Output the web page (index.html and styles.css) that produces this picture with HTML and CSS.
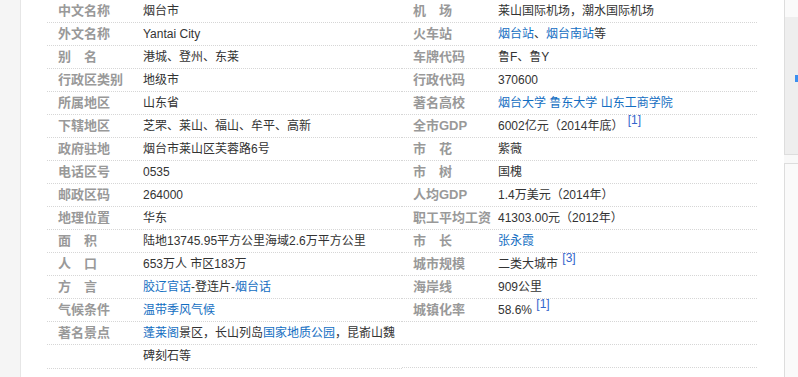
FILE: index.html
```html
<!DOCTYPE html>
<html lang="zh-CN">
<head>
<meta charset="utf-8">
<title>烟台市 基本信息</title>
<link rel="stylesheet" href="styles.css">
</head>
<body>
<div class="page">
  <aside class="rail"></aside>
  <main class="content">
    <div class="basic-info">
      <dl class="info-col">
        <div class="item"><dt>中文名称</dt><dd>烟台市</dd></div>
        <div class="item"><dt>外文名称</dt><dd>Yantai City</dd></div>
        <div class="item"><dt>别　名</dt><dd>港城、登州、东莱</dd></div>
        <div class="item"><dt>行政区类别</dt><dd>地级市</dd></div>
        <div class="item"><dt>所属地区</dt><dd>山东省</dd></div>
        <div class="item"><dt>下辖地区</dt><dd>芝罘、莱山、福山、牟平、高新</dd></div>
        <div class="item"><dt>政府驻地</dt><dd>烟台市莱山区芙蓉路6号</dd></div>
        <div class="item"><dt>电话区号</dt><dd>0535</dd></div>
        <div class="item"><dt>邮政区码</dt><dd>264000</dd></div>
        <div class="item"><dt>地理位置</dt><dd>华东</dd></div>
        <div class="item"><dt>面　积</dt><dd>陆地13745.95平方公里海域2.6万平方公里</dd></div>
        <div class="item"><dt>人　口</dt><dd>653万人 市区183万</dd></div>
        <div class="item"><dt>方　言</dt><dd><a href="#">胶辽官话</a>-登连片-<a href="#">烟台话</a></dd></div>
        <div class="item"><dt>气候条件</dt><dd><a href="#">温带季风气候</a></dd></div>
        <div class="item item--wrap"><dt>著名景点</dt><dd><a href="#">蓬莱阁</a>景区，长山列岛<a href="#">国家地质公园</a><span>，昆嵛山魏</span><span>碑刻石等</span></dd></div>
      </dl>
      <dl class="info-col">
        <div class="item"><dt>机　场</dt><dd>莱山国际机场，潮水国际机场</dd></div>
        <div class="item"><dt>火车站</dt><dd><a href="#">烟台站</a>、<a href="#">烟台南站</a>等</dd></div>
        <div class="item"><dt>车牌代码</dt><dd>鲁F、鲁Y</dd></div>
        <div class="item"><dt>行政代码</dt><dd>370600</dd></div>
        <div class="item"><dt>著名高校</dt><dd><a href="#">烟台大学</a> <a href="#">鲁东大学</a> <a href="#">山东工商学院</a></dd></div>
        <div class="item"><dt>全市GDP</dt><dd>6002亿元（2014年底） <sup class="ref">[1]</sup></dd></div>
        <div class="item"><dt>市　花</dt><dd>紫薇</dd></div>
        <div class="item"><dt>市　树</dt><dd>国槐</dd></div>
        <div class="item"><dt>人均GDP</dt><dd>1.4万美元（2014年）</dd></div>
        <div class="item"><dt>职工平均工资</dt><dd>41303.00元（2012年）</dd></div>
        <div class="item"><dt>市　长</dt><dd><a href="#">张永霞</a></dd></div>
        <div class="item"><dt>城市规模</dt><dd>二类大城市 <sup class="ref">[3]</sup></dd></div>
        <div class="item"><dt>海岸线</dt><dd>909公里</dd></div>
        <div class="item"><dt>城镇化率</dt><dd>58.6% <sup class="ref">[1]</sup></dd></div>
        <div class="item item--empty"><dt></dt><dd></dd></div>
        <div class="item item--empty"><dt></dt><dd></dd></div>
      </dl>
    </div>
  </main>
  <aside class="side">
    <div class="side-top"></div>
    <div class="side-panel"><span class="side-tab"></span></div>
    <div class="side-gap"></div>
    <div class="side-box"></div>
  </aside>
</div>
</body>
</html>
```

FILE: styles.css
```css
html, body {
  margin: 0;
  padding: 0;
  background: #ffffff;
}

body {
  font-family: "Liberation Sans", Arial, "Noto Sans CJK SC", sans-serif;
  font-size: 12px;
  color: #333333;
}

.page {
  display: flex;
  width: 798px;
  height: 377px;
  overflow: hidden;
}

.rail {
  width: 20px;
  flex: none;
  background: #f5f5f5;
  border-right: 1px solid #e6e6e6;
}

.content {
  flex: 1;
  padding-left: 26px;
  background: #ffffff;
}

.basic-info {
  display: flex;
  width: 710px;
}

.info-col {
  width: 355px;
  margin: 0;
  padding: 0;
}

.item {
  position: relative;
  display: flex;
  border-bottom: 1px dotted #d6d6d6;
  line-height: 22px;
  min-height: 22px;
}

.item--wrap::before {
  content: "";
  position: absolute;
  left: 0;
  right: 0;
  top: 22px;
  border-top: 1px dotted #d6d6d6;
}

.item--wrap dd {
  line-height: 23px;
}

.item dt {
  flex: none;
  width: 85px;
  padding-left: 11px;
  margin: 0;
  font-weight: 700;
  font-size: 13px;
  color: #999999;
  white-space: nowrap;
}

.item dd {
  flex: 1;
  margin: 0;
  padding-right: 4px;
  color: #333333;
}

.item a {
  color: #136ec2;
  text-decoration: none;
}

.ref {
  font-size: 12px;
  line-height: 0;
  color: #3366cc;
  vertical-align: 0;
  position: relative;
  top: -6px;
  margin-left: 1px;
}

.side {
  width: 14px;
  flex: none;
  display: flex;
  flex-direction: column;
  background: #f8f8f8;
}

.side-top {
  height: 17px;
  background: #fafafa;
  border-left: 1px solid #dddddd;
}

.side-panel {
  position: relative;
  height: 137px;
  background: #eeeeee;
  border-left: 1px solid #dddddd;
  border-bottom: 1px solid #dddddd;
}

.side-tab {
  position: absolute;
  right: 0;
  top: 58px;
  width: 3px;
  height: 7px;
  background: #3b8ff0;
}

.side-gap {
  height: 8px;
}

.side-box {
  flex: 1;
  background: #fafafa;
  border-left: 1px solid #dddddd;
  border-top: 1px solid #dddddd;
}
```
